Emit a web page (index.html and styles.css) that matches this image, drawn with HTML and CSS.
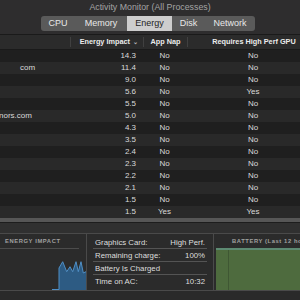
FILE: index.html
```html
<!DOCTYPE html>
<html lang="en">
<head>
    <meta charset="UTF-8">
    <title>Activity Monitor (All Processes)</title>
    <link rel="stylesheet" href="styles.css">
</head>
<body>
    <div class="window">
        <div class="titlebar">
            <div class="title">Activity Monitor (All Processes)</div>
            <div class="tabs">
                <span class="tab tab-cpu">CPU</span>
                <span class="tab tab-mem">Memory</span>
                <span class="tab tab-energy active">Energy</span>
                <span class="tab tab-disk">Disk</span>
                <span class="tab tab-net">Network</span>
            </div>
        </div>

        <div class="table">
            <div class="row head">
                <div class="cell name"></div>
                <div class="cell impact">Energy Impact <span class="chev">&#8964;</span></div>
                <div class="cell nap">App Nap</div>
                <div class="cell gpu">Requires High Perf GPU</div>
            </div>
            <div class="row"><div class="cell name"></div><div class="cell impact">14.3</div><div class="cell nap">No</div><div class="cell gpu">No</div></div>
            <div class="row"><div class="cell name"><span class="clip c1">com</span></div><div class="cell impact">11.4</div><div class="cell nap">No</div><div class="cell gpu">No</div></div>
            <div class="row"><div class="cell name"></div><div class="cell impact">9.0</div><div class="cell nap">No</div><div class="cell gpu">No</div></div>
            <div class="row"><div class="cell name"></div><div class="cell impact">5.6</div><div class="cell nap">No</div><div class="cell gpu">Yes</div></div>
            <div class="row"><div class="cell name"></div><div class="cell impact">5.5</div><div class="cell nap">No</div><div class="cell gpu">No</div></div>
            <div class="row"><div class="cell name"><span class="clip c2">nors.com</span></div><div class="cell impact">5.0</div><div class="cell nap">No</div><div class="cell gpu">No</div></div>
            <div class="row"><div class="cell name"></div><div class="cell impact">4.3</div><div class="cell nap">No</div><div class="cell gpu">No</div></div>
            <div class="row"><div class="cell name"></div><div class="cell impact">3.5</div><div class="cell nap">No</div><div class="cell gpu">No</div></div>
            <div class="row"><div class="cell name"></div><div class="cell impact">2.4</div><div class="cell nap">No</div><div class="cell gpu">No</div></div>
            <div class="row"><div class="cell name"></div><div class="cell impact">2.3</div><div class="cell nap">No</div><div class="cell gpu">No</div></div>
            <div class="row"><div class="cell name"></div><div class="cell impact">2.2</div><div class="cell nap">No</div><div class="cell gpu">No</div></div>
            <div class="row"><div class="cell name"></div><div class="cell impact">2.1</div><div class="cell nap">No</div><div class="cell gpu">No</div></div>
            <div class="row"><div class="cell name"></div><div class="cell impact">1.5</div><div class="cell nap">No</div><div class="cell gpu">No</div></div>
            <div class="row"><div class="cell name"></div><div class="cell impact">1.5</div><div class="cell nap">Yes</div><div class="cell gpu">Yes</div></div>
        </div>

        <div class="splitter"></div>
        <div class="gap"></div>

        <div class="panel">
            <div class="box energy">
                <div class="label">ENERGY IMPACT</div>
                <svg class="graph" width="86" height="42" viewBox="0 0 86 42">
                    <line x1="0" y1="0.5" x2="79" y2="0.5" stroke="#4c4c4c" stroke-width="1"/>
                    <polygon points="52,42 59,42 59,20 62.7,13.7 66.7,23.7 70,18.7 72.7,23.7 76,13.7 78.3,23.7 81,13.7 83.3,25 86,23.7 86,42" fill="#2d5b83"/>
                    <polyline points="52,41.5 59,41.5 59,20 62.7,13.7 66.7,23.7 70,18.7 72.7,23.7 76,13.7 78.3,23.7 81,13.7 83.3,25 86,23.7" fill="none" stroke="#4f8fc6" stroke-width="1"/>
                </svg>
            </div>
            <div class="box stats">
                <div class="stat"><span>Graphics Card:</span><span>High Perf.</span></div>
                <div class="stat"><span>Remaining charge:</span><span>100%</span></div>
                <div class="stat"><span>Battery Is Charged</span><span></span></div>
                <div class="stat last"><span>Time on AC:</span><span>10:32</span></div>
            </div>
            <div class="box battery">
                <div class="label">BATTERY (Last 12 hours)</div>
                <div class="charge">
                    <div class="tick"></div>
                </div>
            </div>
        </div>
    </div>
</body>
</html>
```
FILE: styles.css
```css
body {
    margin: 0;
    width: 300px;
    height: 300px;
    overflow: hidden;
    background: #2a2a2a;
    font-family: 'Liberation Sans', Arial, sans-serif;
    color: #d6d6d6;
}
.window {
    width: 300px;
    height: 300px;
    overflow: hidden;
}

/* title bar + segmented control */
.titlebar {
    height: 34px;
    background: #2e2d2e;
    border-bottom: 1px solid #1a1a1a;
}
.title {
    height: 15px;
    line-height: 14px;
    text-align: center;
    font-size: 8.8px;
    color: #a4a4a4;
    white-space: nowrap;
}
.tabs {
    display: flex;
    margin: 1px 0 0 41px;
    height: 15px;
    width: 214px;
    background: #5a5a5a;
    border-radius: 3px;
    overflow: hidden;
}
.tab {
    height: 15px;
    line-height: 15px;
    font-size: 9px;
    color: #e8e8e8;
    text-align: center;
}
.tab-cpu { width: 34px; }
.tab-mem { width: 52px; }
.tab-energy { width: 45px; }
.tab-disk { width: 33px; }
.tab-net { width: 50px; }
.tab.active {
    background: #cdcdcd;
    color: #232323;
}

/* process table */
.row {
    display: flex;
    height: 12px;
    line-height: 12px;
    font-size: 8px;
    color: #dadada;
    background: #1f1f1f;
}
.row:nth-child(odd) {
    background: #292929;
}
.row.head {
    height: 14px;
    line-height: 14px;
    background: #2b2b2b;
    border-bottom: 1px solid #1a1a1a;
    font-size: 7.3px;
    font-weight: 700;
    color: #ececec;
}
.cell {
    white-space: nowrap;
    overflow: hidden;
}
.name {
    width: 70px;
}
.impact {
    width: 73px;
    text-align: right;
    padding-right: 7px;
    box-sizing: border-box;
}
.nap {
    width: 43px;
    text-align: center;
}
.gpu {
    flex: 1;
    text-align: center;
    padding-left: 20px;
}
.head .name,
.head .impact,
.head .nap {
    border-right: 1px solid #404040;
    margin: 2px 0;
    height: 10px;
    line-height: 10px;
}
.head .impact {
    padding-right: 5px;
}
.chev {
    font-size: 6px;
    color: #bbbbbb;
    margin-left: 1px;
}
.clip.c1 {
    padding-left: 20px;
}
.clip.c2 {
    margin-left: -1px;
}

.splitter {
    height: 4px;
    background: #565656;
    border-bottom: 1px solid #1d1d1d;
}
.gap {
    height: 10px;
    background: #303030;
    border-bottom: 1px solid #4a4a4a;
}

/* bottom panel */
.panel {
    display: flex;
    height: 56px;
    background: #2b2b2b;
    border-bottom: 1px solid #4a4a4a;
}
.box {
    box-sizing: border-box;
}
.label {
    height: 14px;
    line-height: 14px;
    font-size: 5.8px;
    font-weight: 700;
    letter-spacing: 0.6px;
    color: #a0a0a0;
    white-space: nowrap;
    overflow: hidden;
}
.energy {
    width: 87px;
    border-right: 1px solid #4a4a4a;
}
.energy .label {
    padding-left: 5px;
}
.graph {
    display: block;
}
.stats {
    width: 127px;
    padding: 2px 6px 0 6px;
    border-right: 1px solid #4a4a4a;
}
.stat {
    display: flex;
    justify-content: space-between;
    height: 12px;
    line-height: 13px;
    font-size: 7.8px;
    color: #dedede;
    border-bottom: 1px solid #545454;
    padding: 0 2px;
    white-space: nowrap;
}
.stat.last {
    border-bottom: none;
}
.battery {
    flex: 1;
    min-width: 0;
    padding-left: 2px;
}
.battery .label {
    padding-left: 16px;
}
.charge {
    height: 42px;
    background: #4e6b3e;
    border-top: 2px solid #5d8a72;
    box-sizing: border-box;
    padding-left: 12px;
}
.tick {
    width: 1px;
    height: 40px;
    background: #3f5733;
}
```
